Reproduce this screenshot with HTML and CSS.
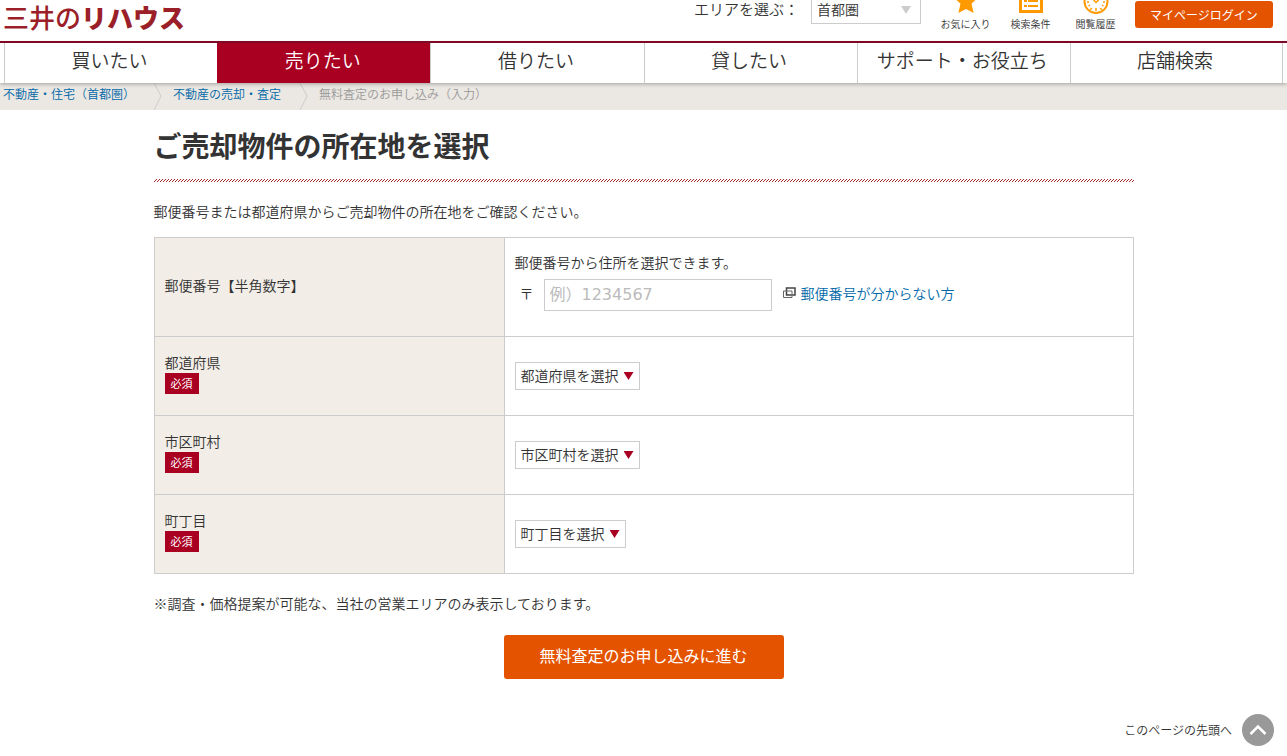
FILE: index.html
```html
<!DOCTYPE html>
<html lang="ja">
<head>
<meta charset="utf-8">
<meta name="viewport" content="width=device-width, initial-scale=1">
<title>無料査定のお申し込み（入力）｜三井のリハウス</title>
<link rel="stylesheet" href="styles.css">
</head>
<body>
<header class="header">
  <a class="logo" href="#">三井の<span class="logo-strong">リハウス</span></a>
  <div class="tools">
    <div class="area">
      <label for="area">エリアを選ぶ：</label>
      <span class="select select-area">
        <select id="area"><option>首都圏</option></select>
      </span>
    </div>
    <a class="tool" href="#">
      <svg width="24" height="16" viewBox="0 0 24 16" aria-hidden="true"><path fill="#f90" d="M12-10.500l3.600 8.500 8.400-.500-6.500 6.300 2.200 9.200-7.700-4-7.700 4 2.200-9.200-6.500-6.300 8.400.500z"/></svg>
      <span>お気に入り</span>
    </a>
    <a class="tool" href="#">
      <svg width="24" height="16" viewBox="0 0 24 16" aria-hidden="true"><path fill="none" stroke="#f90" stroke-width="3" d="M1.500-8h21v19.500h-21z"/><path fill="#f90" d="M5 0h3v2h-3zM9 0h10v2h-10zM5 5h3v2h-3zM9 5h10v2h-10z"/></svg>
      <span>検索条件</span>
    </a>
    <a class="tool" href="#">
      <svg width="26" height="16" viewBox="0 0 26 16" aria-hidden="true"><circle cx="13" cy="1.500" r="11.500" fill="none" stroke="#f90" stroke-width="2"/><path fill="none" stroke="#f90" stroke-width="1.500" d="M9-2l4 4.500 5-5M13 8v3M4 2h2M20 2h2M8.500 8l-1 2M17.500 8l1 2M5.500 6l1.500-1M20.500 6l-1.500-1"/></svg>
      <span>閲覧履歴</span>
    </a>
    <a class="login" href="#">マイページログイン</a>
  </div>
</header>
<nav class="nav">
  <a href="#">買いたい</a>
  <a class="current" href="#">売りたい</a>
  <a href="#">借りたい</a>
  <a href="#">貸したい</a>
  <a href="#">サポート・お役立ち</a>
  <a href="#">店舗検索</a>
</nav>
<div class="crumbs">
  <a href="#">不動産・住宅（首都圏）</a>
  <svg width="10" height="27" viewBox="0 0 10 27" aria-hidden="true"><path d="M1 0l7 13-7 14" fill="none" stroke="#ccc"/></svg>
  <a href="#">不動産の売却・査定</a>
  <svg width="10" height="27" viewBox="0 0 10 27" aria-hidden="true"><path d="M1 0l7 13-7 14" fill="none" stroke="#ccc"/></svg>
  <span>無料査定のお申し込み（入力）</span>
</div>
<main class="main">
  <h1>ご売却物件の所在地を選択</h1>
  <p class="lead">郵便番号または都道府県からご売却物件の所在地をご確認ください。</p>
  <form>
    <table class="form">
      <tr>
        <th class="middle" scope="row"><label for="zip">郵便番号【半角数字】</label></th>
        <td class="zip-cell">
          <p>郵便番号から住所を選択できます。</p>
          <div class="zip">
            <span class="mark">〒</span>
            <input id="zip" type="text" placeholder="例）1234567">
            <a href="#"><svg width="13" height="12" viewBox="0 0 13 12" aria-hidden="true"><path d="M3.500 1h8.500v7h-8.500z" fill="none" stroke="#444" stroke-width="1.500"/><path d="M.500 4h8.500v6.500h-8.500z" fill="none" stroke="#666"/></svg>郵便番号が分からない方</a>
          </div>
        </td>
      </tr>
      <tr>
        <th scope="row"><label for="pref">都道府県</label><span class="required">必須</span></th>
        <td><span class="select"><select id="pref"><option>都道府県を選択</option></select></span></td>
      </tr>
      <tr>
        <th scope="row"><label for="city">市区町村</label><span class="required">必須</span></th>
        <td><span class="select"><select id="city"><option>市区町村を選択</option></select></span></td>
      </tr>
      <tr>
        <th scope="row"><label for="town">町丁目</label><span class="required">必須</span></th>
        <td><span class="select"><select id="town"><option>町丁目を選択</option></select></span></td>
      </tr>
    </table>
    <p class="note">※調査・価格提案が可能な、当社の営業エリアのみ表示しております。</p>
    <button class="submit" type="submit">無料査定のお申し込みに進む</button>
  </form>
</main>
<footer class="footer">
  <a href="#"><span>このページの先頭へ</span>
    <svg width="32" height="32" viewBox="0 0 32 32" aria-hidden="true"><circle cx="16" cy="16" r="16" fill="#999"/><path d="M8.500 20l7.500-7.500 7.500 7.500" fill="none" stroke="#fff" stroke-width="2.500"/></svg>
  </a>
</footer>
</body>
</html>
```
FILE: styles.css
```css
* { box-sizing: border-box; }
body {
  margin: 0;
  color: #333;
  background: #fff;
  font: 14px/21px "Noto Sans CJK JP", sans-serif;
  font-weight: 350;
}
a { color: #0068a8; text-decoration: none; }
p, h1 { margin: 0; }
svg { display: block; }
input, select, button { font: inherit; color: inherit; border-radius: 0; }

.header {
  display: flex;
  justify-content: space-between;
  height: 43px;
  padding: 0 14px 0 3px;
  border-bottom: 2px solid #860a28;
}
.logo {
  color: #9b1f28;
  font-size: 26px;
  line-height: 34px;
  font-weight: 500;
}
.logo-strong { font-weight: 900; }
.tools { display: flex; align-items: flex-start; }
.area {
  display: flex;
  align-items: flex-start;
  gap: 12px;
  margin-right: 12px;
  font-size: 15px;
}
.area label { line-height: 18px; }
.tool {
  display: flex;
  flex-direction: column;
  align-items: center;
  width: 65px;
  color: #333;
  font-size: 10px;
  line-height: 16px;
}
.login {
  margin: 1px 0 0 7px;
  width: 138px;
  border-radius: 3px;
  background: #e45300;
  color: #fff;
  font-size: 12px;
  font-weight: 400;
  line-height: 27px;
  text-align: center;
}

.select { display: inline-grid; align-items: center; vertical-align: top; }
.select select {
  grid-area: 1 / 1;
  height: 28px;
  padding: 0 20px 2px 5px;
  border: 1px solid #ccc;
  background: #fff;
  appearance: none;
  font-size: 14px;
}
.select::after {
  content: "";
  grid-area: 1 / 1;
  justify-self: end;
  width: 10px;
  height: 8px;
  margin-right: 6px;
  background: #a90022;
  clip-path: polygon(0 0, 100% 0, 50% 100%);
  pointer-events: none;
}
.select-area { margin-top: -4px; }
.select-area select { width: 110px; }
.select-area::after { margin-right: 10px; background: #ccc; }

.nav {
  display: grid;
  grid-template-columns: repeat(6, 1fr);
  position: relative;
  padding: 0 4px;
  background: #fff;
  box-shadow: 0 1px 4px rgba(0, 0, 0, .3);
}
.nav a {
  height: 40px;
  padding-right: 3px;
  border-left: 1px solid #ccc;
  color: #333;
  font-size: 19px;
  line-height: 34px;
  text-align: center;
}
.nav a:last-child { border-right: 1px solid #ccc; }
.nav .current { border-color: #a90022; background: #a90022; color: #fff; }

.crumbs {
  display: flex;
  gap: 10px;
  height: 27px;
  padding-left: 3px;
  background: #ebe7e2;
  color: #999;
  font-size: 12px;
  line-height: 22px;
}
.crumbs svg { margin-left: 8px; }

.main { width: 980px; max-width: 100%; margin: 0 auto; padding-top: 16px; }
h1 {
  font-size: 28px;
  line-height: 38px;
  font-weight: 700;
}
h1::after {
  content: "";
  display: block;
  height: 3px;
  margin-top: 15px;
  background:
    repeating-linear-gradient(90deg, #fff 0 2px, #a52a25 2px 3px) 0 0 / 100% 1px no-repeat,
    repeating-linear-gradient(90deg, #fff 0 1px, #a52a25 1px 2px, #fff 2px 3px) 0 1px / 100% 1px no-repeat,
    repeating-linear-gradient(90deg, #a52a25 0 1px, #fff 1px 3px) 0 2px / 100% 1px no-repeat;
}
.lead { padding: 19px 0 15px; }
.form { width: 100%; border-collapse: collapse; table-layout: fixed; }
.form th, .form td {
  padding: 15px 10px;
  border: 1px solid #ccc;
  text-align: left;
  vertical-align: top;
}
.form th { width: 350px; background: #f2ede7; font-weight: inherit; }
.form th.middle { padding: 0 10px 3px; vertical-align: middle; }
.form td { padding: 25px 10px; }
.form td.zip-cell { padding: 14px 10px 25px; }
.form label { display: block; }
.required {
  display: inline-block;
  padding: 0 6px;
  background: #a90022;
  color: #fff;
  font-size: 11px;
  font-weight: 400;
  vertical-align: top;
}
.zip { display: flex; align-items: center; margin-top: 6px; }
.mark { width: 29px; padding: 0 0 3px 5px; }
.zip input {
  width: 228px;
  height: 32px;
  padding: 0 5px 2px;
  border: 1px solid #ccc;
  font: 16px "DejaVu Sans", "Noto Sans CJK JP", sans-serif;
}
.zip input::placeholder { color: #bbb; }
.zip a {
  display: flex;
  align-items: center;
  gap: 5px;
  margin-left: 11px;
  padding-bottom: 4px;
}
.note { margin-top: 19px; }
.submit {
  display: block;
  width: 280px;
  height: 44px;
  margin: 21px auto 0;
  padding: 0 0 3px;
  border: 0;
  border-radius: 3px;
  background: #e45300;
  color: #fff;
  font-size: 16px;
  font-weight: 400;
}
.footer { display: flex; justify-content: flex-end; padding: 35px 13px 0 0; }
.footer a { display: flex; align-items: center; gap: 10px; color: #333; font-size: 12px; }
.footer span { padding-bottom: 2px; }
```
